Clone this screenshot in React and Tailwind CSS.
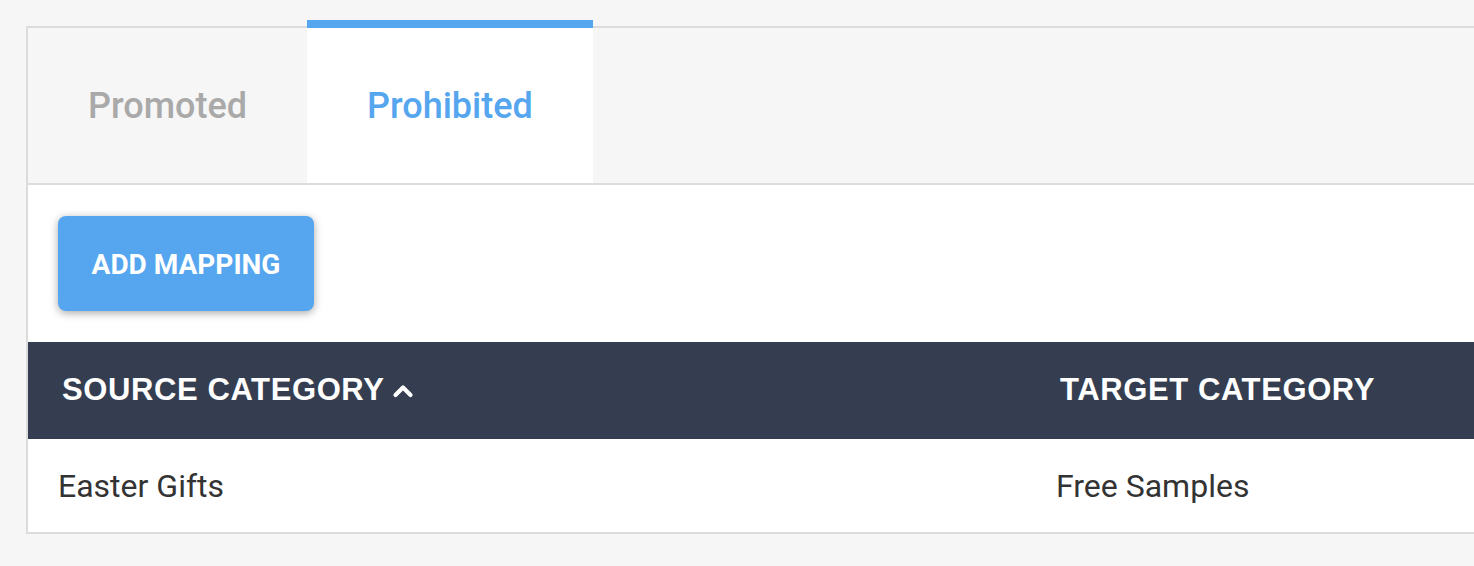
import { useState } from "react";

const tabs = ["Promoted", "Prohibited"];

const rows = [{ source: "Easter Gifts", target: "Free Samples" }];

const ChevronUp = () => (
  <svg width="22" height="14" viewBox="0 0 22 14" className="ml-[8px]">
    <polyline
      points="3.5,11 11,3.5 18.5,11"
      fill="none"
      stroke="#ffffff"
      strokeWidth="4.2"
      strokeLinecap="round"
      strokeLinejoin="round"
    />
  </svg>
);

export default function App() {
  const [active, setActive] = useState("Prohibited");

  return (
    <div className="min-h-[566px] w-[1474px] overflow-hidden bg-[#f6f6f6] pl-[26px] pt-[26px] font-['Roboto',sans-serif]">
      <div className="w-[1500px] border-2 border-[#dcdcdc] bg-white">
        {/* tabs */}
        <div className="flex h-[157px] border-b-2 border-[#dcdcdc] bg-[#f6f6f6]">
          {tabs.map((tab) => {
            const isActive = tab === active;
            return (
              <button
                key={tab}
                onClick={() => setActive(tab)}
                className={
                  isActive
                    ? "relative flex items-center justify-center bg-white px-[60px] text-[36px] font-medium text-[#55a6ef]"
                    : "relative flex items-center justify-center px-[60px] text-[36px] font-medium text-[#a9a9a9]"
                }
              >
                {isActive && (
                  <span className="absolute left-0 right-0 top-[-8px] h-[8px] bg-[#55a6ef]" />
                )}
                <span>{tab}</span>
              </button>
            );
          })}
        </div>

        {/* toolbar */}
        <div className="px-[30px] py-[31px]">
          <button className="flex h-[95px] w-[256px] items-center justify-center rounded-[8px] bg-[#55a6ef] text-[28px] font-bold text-white shadow-[0_2px_9px_rgba(0,0,0,0.35)]">
            <span className="translate-y-[1px]">ADD MAPPING</span>
          </button>
        </div>

        {/* table */}
        <div className="grid grid-cols-[998px_1fr]">
          <div className="flex h-[97px] items-center bg-[#343e50] pl-[34px] font-['Liberation_Sans',Arial,sans-serif] text-[31px] font-bold tracking-[0.6px] text-white">
            SOURCE CATEGORY
            <ChevronUp />
          </div>
          <div className="flex h-[97px] items-center bg-[#343e50] pl-[34px] font-['Liberation_Sans',Arial,sans-serif] text-[31px] font-bold tracking-[0.6px] text-white">
            TARGET CATEGORY
          </div>
          {rows.map((r) => (
            <div key={r.source} className="contents">
              <div className="flex h-[93px] items-center pl-[30px] text-[32px] text-[#333333]">
                {r.source}
              </div>
              <div className="flex h-[93px] items-center pl-[30px] text-[32px] text-[#333333]">
                {r.target}
              </div>
            </div>
          ))}
        </div>
      </div>
    </div>
  );
}
